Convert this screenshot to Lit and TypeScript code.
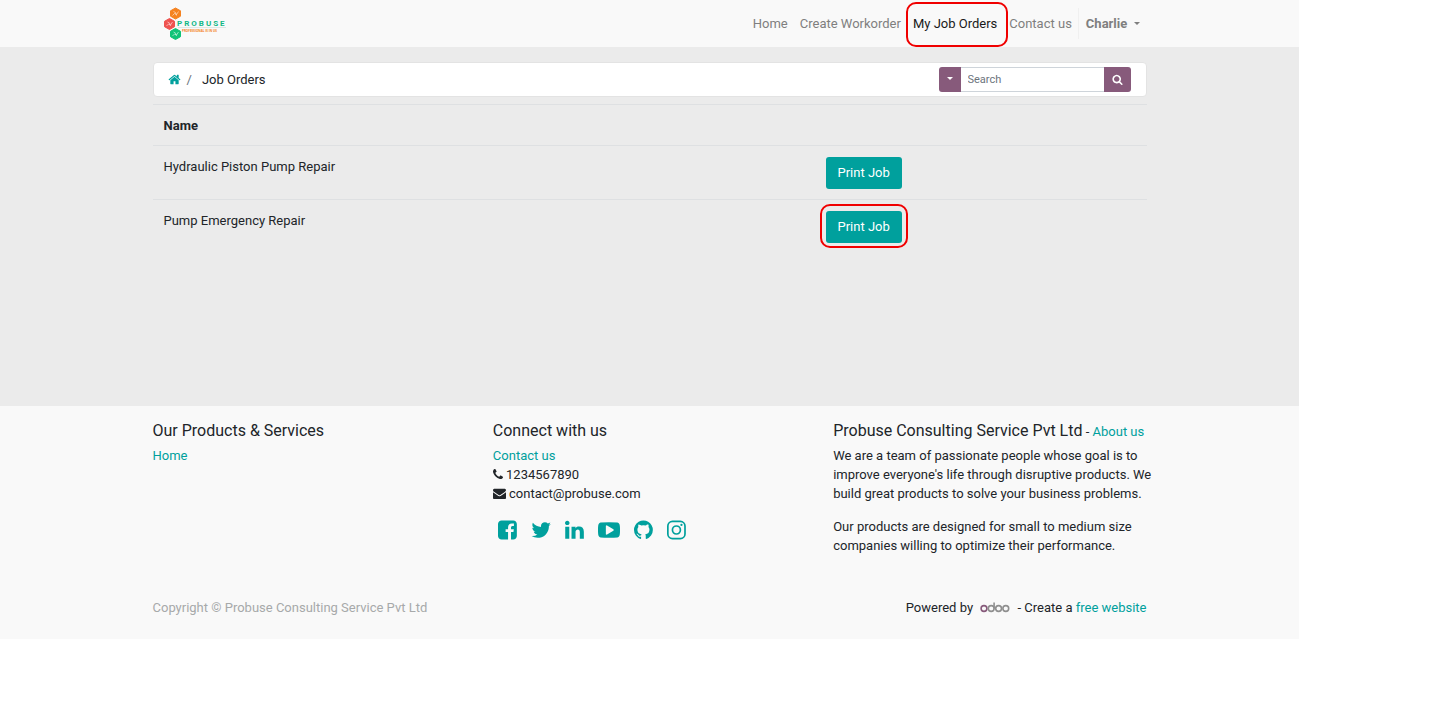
import { LitElement, html, svg, css } from "lit";
import { customElement } from "lit/decorators.js";

const ICONS: Record<string, string> = {
  home: "M1472 992v480q0 26-19 45t-45 19h-384v-384h-256v384h-384q-26 0-45-19t-19-45v-480q0-1 .5-3t.5-3l575-474 575 474q1 2 1 6zm223-69l-62 74q-8 9-21 11h-3q-13 0-21-7l-692-577-692 577q-12 8-24 7-13-2-21-11l-62-74q-8-10-7-23.500t11-21.500l719-599q32-26 76-26t76 26l244 204v-195q0-14 9-23t23-9h192q14 0 23 9t9 23v408l219 182q10 8 11 21.500t-7 23.500z",
  search: "M1216 832q0-185-131.500-316.500t-316.500-131.500-316.500 131.500-131.500 316.500 131.500 316.500 316.500 131.500 316.500-131.500 131.500-316.500zm512 832q0 52-38 90t-90 38q-54 0-90-38l-343-342q-179 124-399 124-143 0-273.500-55.500t-225-150-150-225-55.500-273.500 55.500-273.500 150-225 225-150 273.500-55.500 273.500 55.500 225 150 150 225 55.500 273.500q0 220-124 399l343 343q37 37 37 90z",
  phone: "M1600 1240q0 27-10 70.500t-21 68.500q-21 50-122 106-94 51-186 51-27 0-52.500-3.500t-57.500-12.500-47.500-14.500-55.500-20.500-49-18q-98-35-175-83-128-79-264.500-215.500t-215.500-264.500q-48-77-83-175-3-9-18-49t-20.500-55.500-14.500-47.500-12.500-57.500-3.500-52.500q0-92 51-186 56-101 106-122 25-11 68.500-21t70.500-10q14 0 21 3 18 6 53 76 11 19 30 54t35 63.500 31 53.500q3 4 17.500 25t21.500 35.500 7 28.500q0 20-28.500 50t-62 55-62 53-28.500 46q0 9 5 22.500t8.500 20.500 14 24 11.500 19q76 137 174 235t235 174q2 1 19 11.500t24 14 20.500 8.500 22.500 5q18 0 46-28.500t53-62 55-62 50-28.500q14 0 28.500 7t35.500 21.500 25 17.500q25 15 53.500 31t63.500 35 54 30q70 35 76 53 3 7 3 21z",
  envelope: "M1792 710v794q0 66-47 113t-113 47h-1472q-66 0-113-47t-47-113v-794q44 49 101 87 362 246 497 345 57 42 92.500 65.500t94.500 48 110 24.500h2q51 0 110-24.500t94.500-48 92.500-65.500q170-123 498-345 57-39 100-87zm0-294q0 79-49 151t-122 123q-376 261-468 325-10 7-42.500 31t-54 38.500-52 32.500-57.500 27-50 9h-2q-23 0-50-9t-57.500-27-52-32.500-54-38.500-42.500-31q-91-64-262-182.500t-205-142.500q-62-42-117-115.500t-55-136.500q0-78 41.500-130t118.500-52h1472q65 0 112.500 47t47.500 113z",
  facebook: "M1376 128q119 0 203.500 84.500t84.500 203.500v960q0 119-84.500 203.500t-203.500 84.500h-188v-595h199l30-232h-229v-148q0-56 23.500-84t91.500-28l122-1v-207q-63-9-178-9-136 0-217.500 80t-81.500 226v171h-200v232h200v595h-532q-119 0-203.500-84.500t-84.500-203.500v-960q0-119 84.500-203.500t203.500-84.500h960z",
  twitter: "M1684 408q-67 98-162 167 1 14 1 42 0 130-38 259.500t-115.500 248.500-184.500 210.500-258 146-323 54.500q-271 0-496-145 35 4 78 4 225 0 401-138-105-2-188-64.500t-114-159.500q33 5 61 5 43 0 85-11-112-23-185.500-111.500t-73.500-205.500v-4q68 38 146 41-66-44-105-115t-39-154q0-88 44-163 121 149 294.500 238.500t371.500 99.500q-8-38-8-74 0-134 94.500-228.500t228.500-94.500q140 0 236 102 109-21 205-78-37 115-142 178 93-10 186-50z",
  linkedin: "M477 625v991h-330v-991h330zm21-306q1 73-50.500 122t-135.500 49h-2q-82 0-132-49t-50-122q0-74 51.500-122.500t134.500-48.500 133 48.500 51 122.500zm1166 729v568h-329v-530q0-105-40.500-164.500t-126.500-59.500q-63 0-105.500 34.500t-63.500 85.500q-11 30-11 81v553h-329q2-399 2-647t-1-296l-1-48h329v144h-2q20-32 41-56t56.500-52 87-43.500 114.500-15.500q171 0 275 113.500t104 332.500z",
  youtube: "M1280 896q0-37-30-54l-512-320q-31-20-65-2-33 18-33 56v640q0 38 33 56 16 8 31 8 20 0 34-10l512-320q30-17 30-54zm512 0q0 96-1 150t-8.500 136.500-22.500 147.500q-16 73-69 123t-124 58q-222 25-671 25t-671-25q-71-8-124.500-58t-69.500-123q-14-65-21.500-147.500t-8.500-136.500-1-150 1-150 8.500-136.500 22.500-147.500q16-73 69-123t124-58q222-25 671-25t671 25q71 8 124.500 58t69.500 123q14 65 21.500 147.500t8.500 136.500 1 150z",
  github: "M896 128q209 0 385.500 103t279.500 279.500 103 385.500q0 251-146.500 451.500t-378.500 277.500q-27 5-40-7t-13-30q0-3 .5-76.500t.5-134.500q0-97-52-142 57-6 102.500-18t94-39 81-66.500 53-105 20.500-150.500q0-119-79-206 37-91-8-204-28-9-81 11t-92 44l-38 24q-93-26-192-26t-192 26q-16-11-42.500-27t-83.500-38.500-85-13.500q-45 113-8 204-79 87-79 206 0 85 20.500 150t52.500 105 80.500 67 94 39 102.500 18q-39 36-49 103-21 10-45 15t-57 5-65.500-21.500-55.500-62.500q-19-32-48.500-52t-49.500-24l-20-3q-21 0-29 4.500t-5 11.500 9 14 13 12l7 5q22 10 43.500 38t31.500 51l10 23q13 38 44 61.500t67 30 69.500 7 55.500-3.500l23-4q0 38 .5 88.500t.5 54.500q0 18-13 30t-40 7q-232-77-378.500-277.500t-146.500-451.500q0-209 103-385.500t279.500-279.500 385.500-103z",
};

const icon = (name: string, cls = "icon", box = "0 0 1792 1792") => html`
  <svg class=${cls} viewBox=${box} fill="currentColor" aria-hidden="true">
    ${name === "instagram"
      ? svg`<g fill="none" stroke="currentColor" stroke-width="138">
          <rect x="197" y="197" width="1398" height="1398" rx="380"></rect>
          <circle cx="896" cy="896" r="325"></circle></g>
          <circle cx="1306" cy="486" r="92"></circle>`
      : svg`<path d=${ICONS[name]}></path>`}
  </svg>`;

const SOCIAL = [
  { name: "facebook", label: "Facebook", box: "128 0 1536 1792" },
  { name: "twitter", label: "Twitter", box: "64 0 1664 1792" },
  { name: "linkedin", label: "LinkedIn", box: "128 0 1536 1792" },
  { name: "youtube", label: "YouTube", box: "0 0 1792 1792" },
  { name: "github", label: "GitHub", box: "128 0 1536 1792" },
  { name: "instagram", label: "Instagram", box: "128 0 1536 1792" },
];

const JOBS = [
  { name: "Hydraulic Piston Pump Repair", marked: false },
  { name: "Pump Emergency Repair", marked: true },
];

@customElement("app-root")
export class AppRoot extends LitElement {
  static styles = css`
    :host {
      display: block;
      margin-right: 152px;
      font: 13px/19px Roboto, sans-serif;
      color: #212529;
    }
    * { box-sizing: border-box; }
    a { color: #00a09d; text-decoration: none; }
    p, h2, ul, ol { margin: 0; padding: 0; list-style: none; }
    .container { max-width: 994px; margin: 0 auto; }
    .icon { width: 13px; height: 13px; vertical-align: -2px; }
    .icon.phone { width: 10px; }
    .caret {
      display: inline-block;
      border: 3px solid transparent;
      border-top-color: currentColor;
      border-bottom: 0;
      vertical-align: 3px;
    }

    .navbar { background: #f9f9f9; }
    .bar { display: flex; align-items: center; justify-content: space-between; height: 47px; }
    .brand { margin-left: 11px; }
    .logo { display: block; width: 64px; height: 34px; }
    .logo-name { font: bold 8px Roboto, sans-serif; letter-spacing: 2px; fill: #12b886; }
    .logo-tag { font: bold 3px "Open Sans", sans-serif; fill: #f58220; }
    .menu { display: flex; align-items: center; }
    .menu a { display: block; padding: 6px; color: #7f7f7f; }
    .menu .active { color: #1a1a1a; }
    .menu .user { padding: 6px 7px; border-left: 1px solid #f0f0f0; font-weight: bold; }
    .user .caret { margin-left: 3px; }
    .marked { position: relative; }
    .marked::after {
      content: "";
      position: absolute;
      inset: -7px -6px -5px;
      border: 2px solid #f00000;
      border-radius: 10px;
      pointer-events: none;
    }
    .marked.active::after { inset: -6px -5px -8px -1px; }

    .main { background: #ebebeb; min-height: 359px; padding-top: 15px; }
    .toolbar {
      display: flex;
      align-items: center;
      justify-content: space-between;
      height: 35px;
      margin-bottom: 7px;
      padding: 0 15px 0 14px;
      background: #fff;
      border: 1px solid #e3e3e3;
      border-radius: 4px;
    }
    .crumbs { display: flex; padding-bottom: 1px; }
    .crumbs li + li::before { content: "/"; padding: 0 10px 0 6px; color: #6c757d; }
    .search { display: flex; height: 25px; }
    .search button {
      padding: 0;
      border: 0;
      background: #875a7b;
      color: #fff;
      font: 11px/16px Roboto, sans-serif;
    }
    .search .filter { width: 22px; border-radius: 3px 0 0 3px; }
    .search .go { width: 27px; border-radius: 0 3px 3px 0; }
    .go .icon { width: 11px; height: 11px; }
    .search input {
      width: 143px;
      padding: 0 7px;
      border: 1px solid #ced4da;
      border-width: 1px 0;
      border-radius: 0;
      background: #fff;
      color: #495057;
      font: 11px/16px Roboto, sans-serif;
    }
    .search input::placeholder { color: #6c757d; opacity: 1; }

    .jobs { width: 100%; border-collapse: collapse; table-layout: fixed; }
    .jobs th, .jobs td {
      padding: 11px 11px 10px;
      border-top: 1px solid #dee0e2;
      text-align: left;
      vertical-align: top;
    }
    .action { width: 33.4%; }
    .print {
      display: block;
      padding: 6px 12px;
      border: 0;
      border-radius: 3px;
      background: #00a09d;
      color: #fff;
      font: 13px/20px Roboto, sans-serif;
    }

    .footer { background: #f9f9f9; padding: 15px 0 22px; }
    .columns { display: grid; grid-template-columns: repeat(3, 1fr); gap: 12px; margin-right: -15px; }
    .columns h2 { display: inline-block; font-size: 16px; font-weight: 400; }
    .heading { margin-bottom: 5px; }
    .columns p + p { margin-top: 14px; }
    .social { display: flex; gap: 14px; margin: 16px 0 0 5px; }
    .social a { display: block; }
    .social-icon { display: block; height: 22px; }
    .legal { display: flex; justify-content: space-between; margin-top: 43px; }
    .copyright { color: #a7a9aa; }
    .odoo { width: 30px; height: 12px; margin: 0 4px; vertical-align: -1px; }
  `;

  private logo() {
    const hex = (x: number, y: number, color: string) => svg`
      <path fill=${color} stroke=${color} stroke-linejoin="round"
        d="M${x} ${y - 5.5}l5 2.800v5.400l-5 2.800l-5-2.800v-5.400z"></path>
      <g fill="none" stroke="#fff" stroke-width=".7" opacity=".75">
        <path d="M${x - 3} ${y + 2}l2-2 2 1 2-3M${x - 2} ${y - 2}l2 1 1 3"></path>
      </g>`;
    return html`<svg class="logo" viewBox="0 0 64 34" role="img" aria-label="Probuse">
      ${hex(11.5, 6.5, "#f58220")} ${hex(5.5, 17, "#ef5350")} ${hex(11.5, 27, "#0fc377")}
      <path d="M14 20.500h48" stroke="#c9dcd4" stroke-width=".6"></path>
      <text class="logo-name" x="13" y="19">PROBUSE</text>
      <text class="logo-tag" x="18" y="25">PROFESSIONAL IS IN US</text>
    </svg>`;
  }

  render() {
    return html`
      <header class="navbar">
        <div class="container bar">
          <a class="brand" href="#">${this.logo()}</a>
          <nav class="menu">
            <a href="#">Home</a>
            <a href="#">Create Workorder</a>
            <a class="active marked" href="#">My Job Orders</a>
            <a href="#">Contact us</a>
            <a class="user" href="#">Charlie <span class="caret"></span></a>
          </nav>
        </div>
      </header>

      <main class="main">
        <div class="container">
          <div class="toolbar">
            <ol class="crumbs">
              <li><a href="#" aria-label="Home">${icon("home")}</a></li>
              <li>Job Orders</li>
            </ol>
            <form class="search">
              <button class="filter" type="button" aria-label="Search options"><span class="caret"></span></button>
              <input type="text" placeholder="Search" aria-label="Search" />
              <button class="go" type="button" aria-label="Submit search">${icon("search")}</button>
            </form>
          </div>
          <table class="jobs">
            <thead>
              <tr><th>Name</th><th class="action"></th></tr>
            </thead>
            <tbody>
              ${JOBS.map((job) => html`<tr>
                <td>${job.name}</td>
                <td><button class=${job.marked ? "print marked" : "print"}>Print Job</button></td>
              </tr>`)}
            </tbody>
          </table>
        </div>
      </main>

      <footer class="footer">
        <div class="container">
          <div class="columns">
            <section>
              <div class="heading"><h2>Our Products &amp; Services</h2></div>
              <a href="#">Home</a>
            </section>
            <section>
              <div class="heading"><h2>Connect with us</h2></div>
              <ul>
                <li><a href="#">Contact us</a></li>
                <li>${icon("phone", "icon phone", "192 0 1408 1792")} 1234567890</li>
                <li>${icon("envelope")} contact@probuse.com</li>
              </ul>
              <div class="social">
                ${SOCIAL.map((s) => html`<a href="#" aria-label=${s.label}>${icon(s.name, "social-icon", s.box)}</a>`)}
              </div>
            </section>
            <section>
              <div class="heading"><h2>Probuse Consulting Service Pvt Ltd</h2> - <a href="#">About us</a></div>
              <p>We are a team of passionate people whose goal is to improve everyone's life through disruptive products. We build great products to solve your business problems.</p>
              <p>Our products are designed for small to medium size companies willing to optimize their performance.</p>
            </section>
          </div>
          <div class="legal">
            <span class="copyright">Copyright © Probuse Consulting Service Pvt Ltd</span>
            <span>Powered by
              <svg class="odoo" viewBox="0 0 30 12" role="img" aria-label="Odoo" fill="none" stroke="#8f8f8f" stroke-width="1.600">
                <circle cx="4" cy="7.500" r="2.900" stroke="#875a7b"></circle>
                <circle cx="11.200" cy="7.500" r="2.900"></circle>
                <path d="M14.100 1.500v6"></path>
                <circle cx="18.600" cy="7.500" r="2.900"></circle>
                <circle cx="25.800" cy="7.500" r="2.900"></circle>
              </svg>
              - Create a <a href="#">free website</a></span>
          </div>
        </div>
      </footer>
    `;
  }
}
